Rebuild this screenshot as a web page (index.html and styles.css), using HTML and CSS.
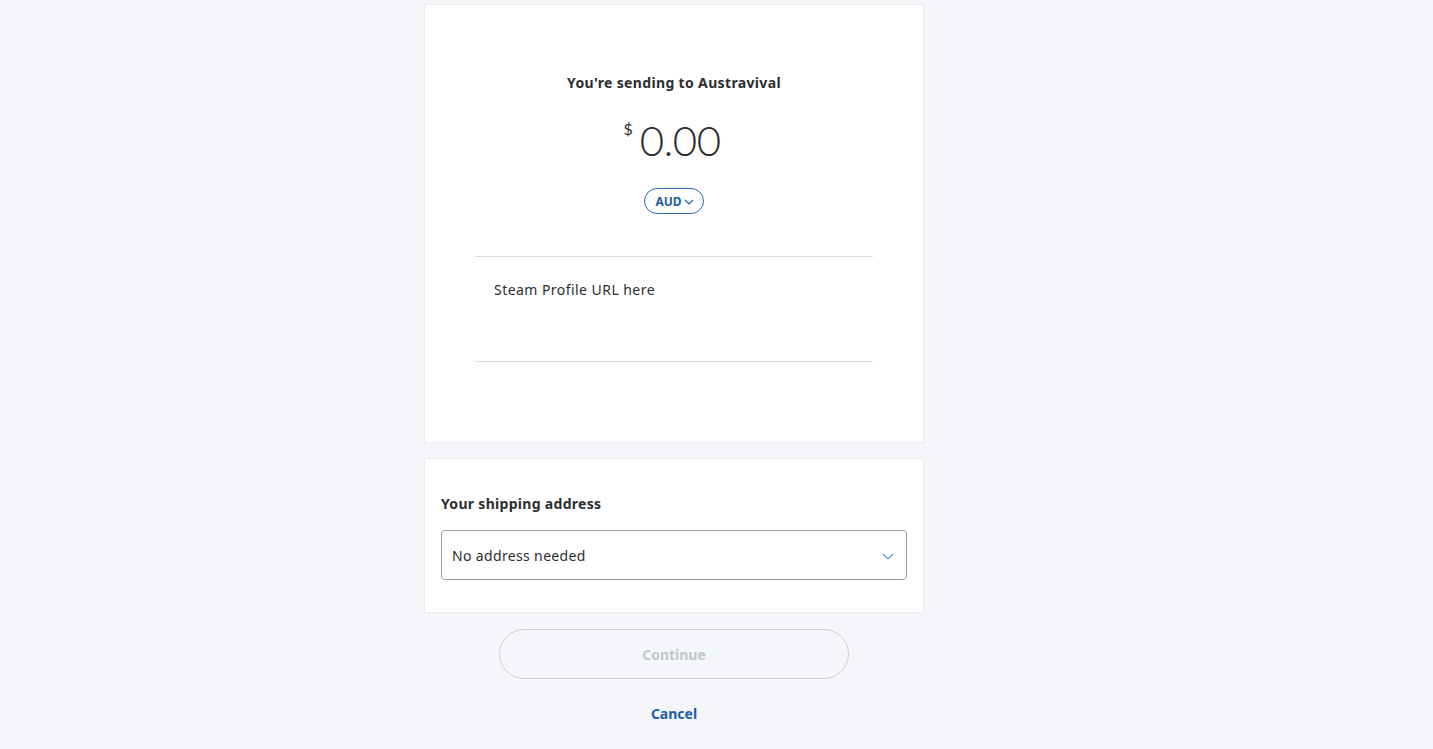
FILE: index.html
```html
<!DOCTYPE html>
<html lang="en">
<head>
<meta charset="utf-8">
<title>Send</title>
<link rel="stylesheet" href="styles.css">
</head>
<body>
<main class="page">
  <section class="card card-amount">
    <h1 class="recipient">You're sending to Austravival</h1>
    <div class="amount"><span class="currency-symbol">$</span><span class="value">0.00</span></div>
    <button class="currency-pill">AUD<svg class="pill-chevron" width="10" height="6" viewBox="0 0 10 6"><path d="M1 1l4 4 4-4" fill="none" stroke="currentColor" stroke-width="1.2"/></svg></button>
    <div class="note">
      <p class="note-text">Steam Profile URL here</p>
    </div>
  </section>
  <section class="card card-shipping">
    <h2 class="shipping-title">Your shipping address</h2>
    <div class="select">
      <span class="select-text">No address needed</span>
      <svg class="select-chevron" width="12" height="7" viewBox="0 0 12 7"><path d="M1 1l5 5 5-5" fill="none" stroke="#5d93c8" stroke-width="1.1"/></svg>
    </div>
  </section>
  <div class="actions">
    <button class="continue" disabled>Continue</button>
    <a class="cancel" href="#">Cancel</a>
  </div>
</main>
</body>
</html>
```
FILE: styles.css
```css
* { box-sizing: border-box; }
html, body { margin: 0; padding: 0; }
body {
  background: #f5f6fa;
  font-family: "Noto Sans", "Liberation Sans", sans-serif;
  color: #2c2e2f;
}
.page {
  width: 500px;
  margin-left: calc(50% - 292.5px);
  padding-top: 4px;
  display: flex;
  flex-direction: column;
}
.card {
  background: #fff;
  border: 1px solid #eaecef;
}
.card-amount {
  height: 439px;
  padding: 71px 50px 0;
  display: flex;
  flex-direction: column;
  align-items: center;
}
.recipient {
  margin: 0;
  font-size: 14px;
  font-weight: 700;
  line-height: 14px;
  letter-spacing: 0.35px;
}
.amount {
  margin-top: 29px;
  display: flex;
  align-items: flex-start;
  height: 50px;
  margin-right: 4px;
}
.currency-symbol {
  font-family: Lato, sans-serif;
  font-size: 16px;
  font-weight: 400;
  margin-top: 0;
  margin-right: 7px;
}
.value {
  font-family: Lato, sans-serif;
  font-size: 42px;
  font-weight: 300;
  line-height: 42px;
  letter-spacing: -0.5px;
}
.currency-pill {
  margin-top: 19px;
  height: 26px;
  padding: 0 9px 0 10px;
  border: 1px solid #2d68b0;
  border-radius: 13px;
  background: #fff;
  color: #1f5ea8;
  font-family: "Noto Sans", sans-serif;
  font-size: 12px;
  font-weight: 700;
  display: flex;
  align-items: center;
  gap: 2px;
}
.pill-chevron { margin-top: 1px; }
.note {
  align-self: stretch;
  margin-top: 42px;
  height: 106px;
  border-top: 1px solid #dcdddf;
  border-bottom: 1px solid #dcdddf;
  padding: 24px 20px 0 19px;
}
.note-text {
  margin: 0;
  font-size: 14px;
  line-height: 18px;
  letter-spacing: 0.45px;
}
.card-shipping {
  margin-top: 15px;
  height: 155px;
  padding: 36px 16px 0;
}
.shipping-title {
  margin: 0;
  font-size: 14px;
  font-weight: 700;
  line-height: 18px;
  letter-spacing: 0.3px;
}
.select {
  margin-top: 17px;
  height: 50px;
  border: 1px solid #9a9ea3;
  border-radius: 4px;
  display: flex;
  align-items: center;
  justify-content: space-between;
  padding: 0 12px 0 10px;
}
.select-text {
  font-size: 14px;
  letter-spacing: 0.35px;
}
.select-chevron { margin-top: 2px; }
.actions {
  display: flex;
  flex-direction: column;
  align-items: center;
  margin-top: 16px;
}
.continue {
  width: 350px;
  height: 50px;
  border: 1px solid #cbd0d4;
  border-radius: 25px;
  background: #f5f6fa;
  color: #c0c7cd;
  font-family: "Noto Sans", sans-serif;
  font-size: 14px;
  font-weight: 700;
}
.cancel {
  margin-top: 25px;
  color: #1f5ea8;
  font-size: 14px;
  font-weight: 700;
  text-decoration: none;
}
```
